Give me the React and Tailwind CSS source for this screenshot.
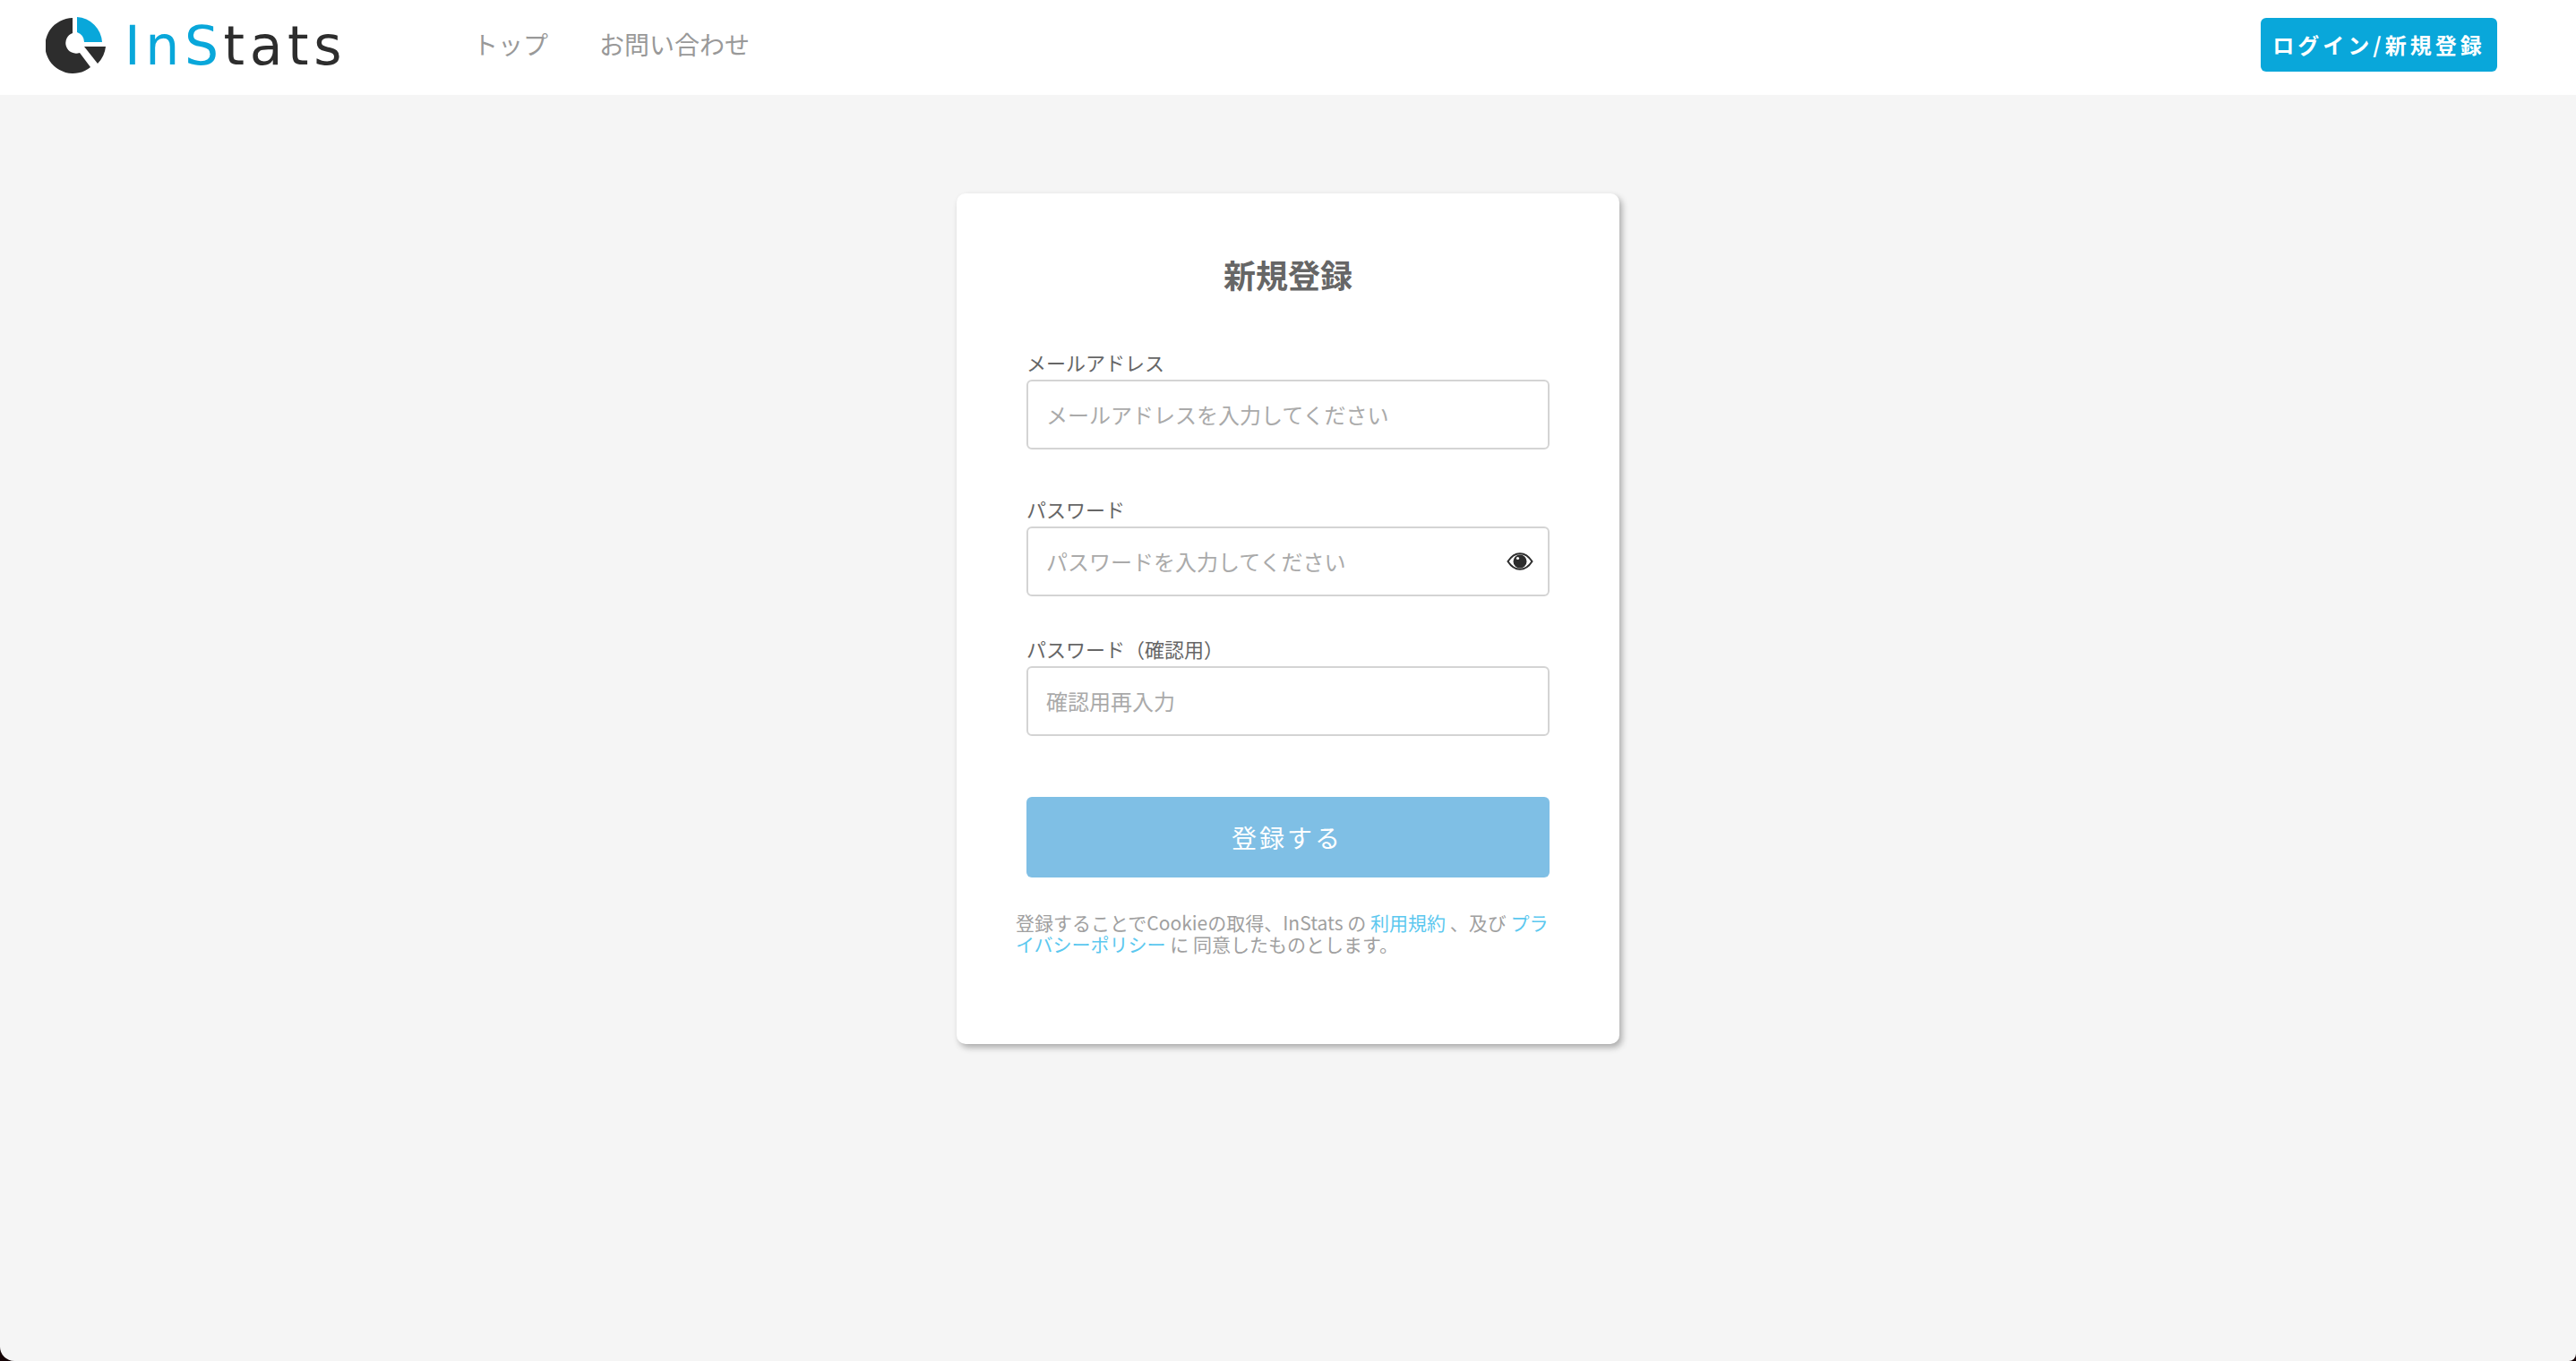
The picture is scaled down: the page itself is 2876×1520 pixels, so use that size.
const jp = "font-['Noto_Sans_CJK_JP','Noto_Sans',sans-serif]";

function Logo() {
  return (
    <div className="flex items-center">
      <svg width="70" height="66" viewBox="50 18 70 66" className="ml-[51px] shrink-0">
        <path d="M85 20 A30 30 0 0 1 113 48 L93 48 A12 12 0 0 0 85 37 Z" fill="#09a7da" />
        <path d="M80 21 A31 31 0 1 0 100 76 L88 60 A11.5 11.5 0 1 1 80 38 Z" fill="#2d2d2d" />
        <path d="M93 53 L117 53 A32 32 0 0 1 108 72 Z" fill="#2d2d2d" />
      </svg>
      <span className="mt-[2px] ml-[18px] font-['DejaVu_Sans',sans-serif] text-[60px] leading-none font-normal tracking-[5.6px] text-[#2d2d2d]">
        <span className="text-[#09a7da]">InS</span>tats
      </span>
    </div>
  );
}

function EyeIcon() {
  return (
    <svg width="30" height="20" viewBox="0 0 30 20" className="shrink-0">
      <path d="M1.5 10 C6 3 10.5 1.2 15 1.2 C19.5 1.2 24 3 28.5 10 C24 17 19.5 18.8 15 18.8 C10.5 18.8 6 17 1.5 10 Z" fill="none" stroke="#2d2d2d" strokeWidth="2" />
      <circle cx="15" cy="10" r="7.5" fill="#2d2d2d" />
      <circle cx="12.5" cy="6.5" r="1.6" fill="#ffffff" />
    </svg>
  );
}

function Field({ label, placeholder, icon, className }) {
  return (
    <div className={className}>
      <label className="block h-[31px] text-[22px] leading-[23px] text-[#666666]">{label}</label>
      <div className="flex h-[78px] items-center rounded-[6px] border-2 border-[#d4d4d4] bg-white pr-[16px] pl-[20px]">
        <input
          placeholder={placeholder}
          className="min-w-0 flex-1 bg-transparent text-[24px] text-[#333333] outline-none placeholder:text-[#aaaaaa]"
        />
        {icon}
      </div>
    </div>
  );
}

export default function App() {
  return (
    <div className={`h-[1520px] w-full overflow-hidden bg-[#140406] ${jp}`}>
      <div className="h-full rounded-br-[8px] rounded-bl-[16px] bg-[#f5f5f5]">
        <header className="flex h-[106px] items-center bg-white pr-[88px] pb-[6px]">
          <Logo />
          <nav className="ml-[141px] flex gap-[57px] pb-[2px] text-[28px] text-[#999999]">
            <a href="#">トップ</a>
            <a href="#">お問い合わせ</a>
          </nav>
          <button className="ml-auto h-[60px] w-[264px] rounded-[6px] bg-[#09a7da] text-[24px] font-bold tracking-[4px] text-white">
            ログイン/新規登録
          </button>
        </header>

        <main className="mx-auto mt-[110px] h-[950px] w-[740px] rounded-[10px] bg-white px-[78px] pt-[62px] shadow-[3px_4px_7px_rgba(0,0,0,0.3)]">
          <h1 className="text-center text-[36px] leading-[56px] font-bold text-[#666666]">新規登録</h1>

          <Field className="mt-[59px]" label="メールアドレス" placeholder="メールアドレスを入力してください" />
          <Field className="mt-[55px]" label="パスワード" placeholder="パスワードを入力してください" icon={<EyeIcon />} />
          <Field className="mt-[47px]" label="パスワード（確認用）" placeholder="確認用再入力" />

          <button className="mt-[68px] h-[90px] w-full rounded-[6px] bg-[#7fbfe5] pr-[2px] text-[28px] tracking-[3px] text-white">
            登録する
          </button>

          <p className="mt-[38px] -ml-[12px] w-[596px] text-[21px] leading-[24px] text-[#a0a0a0]">
            登録することでCookieの取得、InStats の <a href="#" className="text-[#5cc8ef]">利用規約</a> 、及び{' '}
            <a href="#" className="text-[#5cc8ef]">プライバシーポリシー</a> に 同意したものとします。
          </p>
        </main>
      </div>
    </div>
  );
}
